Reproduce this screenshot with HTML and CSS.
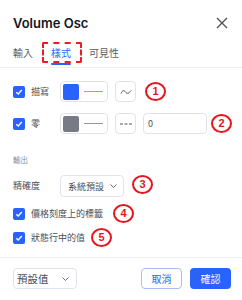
FILE: index.html
```html
<!DOCTYPE html>
<html lang="zh-Hant">
<head>
<meta charset="utf-8">
<link rel="stylesheet" href="styles.css">
</head>
<body>
<div class="dialog">
  <div class="header">
    <div class="title">Volume Osc</div>
    <svg class="close" width="12" height="12" viewBox="0 0 12 12"><path d="M1 1L11 11M11 1L1 11" stroke="#4c4f57" stroke-width="1.3" fill="none"/></svg>
  </div>
  <div class="tabs">
    <div class="tab">輸入</div>
    <div class="tab active">樣式<span class="underline"></span><span class="dashbox"></span></div>
    <div class="tab">可見性</div>
  </div>
  <div class="content">
    <div class="row">
      <div class="lead"><span class="cb"><svg width="8" height="8" viewBox="0 0 8 8"><path d="M1.3 4.2L3.2 6L6.8 2" stroke="#fff" stroke-width="1.3" fill="none"/></svg></span><span class="lbl">描寫</span></div>
      <div class="box colorbtn"><span class="sw blue"></span><span class="ln blueln"></span></div>
      <div class="box sq"><svg width="12" height="8" viewBox="0 0 12 8"><path d="M1 5.5C2.5 2 4 2 5.5 4S8.5 6 11 2.5" stroke="#50535e" stroke-width="1" fill="none"/></svg></div>
      <div class="mark m1">1</div>
    </div>
    <div class="row r2">
      <div class="lead"><span class="cb"><svg width="8" height="8" viewBox="0 0 8 8"><path d="M1.3 4.2L3.2 6L6.8 2" stroke="#fff" stroke-width="1.3" fill="none"/></svg></span><span class="lbl">零</span></div>
      <div class="box colorbtn"><span class="sw gray"></span><span class="ln grayln"></span></div>
      <div class="box sq"><svg width="12" height="4" viewBox="0 0 12 4"><path d="M0 2H3M4.5 2H7.5M9 2H12" stroke="#50535e" stroke-width="1" fill="none"/></svg></div>
      <div class="box input">0</div>
      <div class="mark m2">2</div>
    </div>
    <div class="section">輸出</div>
    <div class="row r3">
      <div class="lead"><span class="lbl plain">精確度</span></div>
      <div class="box select">系統預設<svg width="7" height="4" viewBox="0 0 7 4"><path d="M0.5 0.5L3.5 3.5L6.5 0.5" stroke="#6a6d78" stroke-width="1" fill="none"/></svg></div>
      <div class="mark m3">3</div>
    </div>
    <div class="row cbrow r4">
      <span class="cb"><svg width="8" height="8" viewBox="0 0 8 8"><path d="M1.3 4.2L3.2 6L6.8 2" stroke="#fff" stroke-width="1.3" fill="none"/></svg></span><span class="lbl">價格刻度上的標籤</span>
      <div class="mark m4">4</div>
    </div>
    <div class="row cbrow r5">
      <span class="cb"><svg width="8" height="8" viewBox="0 0 8 8"><path d="M1.3 4.2L3.2 6L6.8 2" stroke="#fff" stroke-width="1.3" fill="none"/></svg></span><span class="lbl">狀態行中的值</span>
      <div class="mark m5">5</div>
    </div>
  </div>
  <div class="footer">
    <div class="box fselect">預設值<svg width="7" height="4" viewBox="0 0 7 4"><path d="M0.5 0.5L3.5 3.5L6.5 0.5" stroke="#6a6d78" stroke-width="1" fill="none"/></svg></div>
    <div class="btns">
      <div class="btn cancel">取消</div>
      <div class="btn ok">確認</div>
    </div>
  </div>
</div>
</body>
</html>
```
FILE: styles.css
```css
* { box-sizing: border-box; }
html, body { margin: 0; padding: 0; background: #fff; }
body {
  font-family: "Noto Sans CJK TC", "Noto Sans", sans-serif;
  color: #131722;
}
.dialog { width: 242px; height: 300px; overflow: hidden; }
.header {
  height: 44px;
  padding: 2px 14px 0 13px;
  display: flex;
  align-items: center;
  justify-content: space-between;
}
.title {
  font-family: "Inter", "Noto Sans", sans-serif;
  font-weight: 600;
  font-size: 13px;
  line-height: 16px;
  color: #131722;
}
.close { display: block; }
.tabs {
  height: 24px;
  display: flex;
  gap: 18px;
  padding-left: 13px;
  border-bottom: 1px solid #eceef2;
}
.tab {
  position: relative;
  font-size: 10px;
  line-height: 14px;
  padding-top: 2px;
  color: #595c66;
}
.tab.active { color: #2962ff; }
.underline {
  position: absolute;
  left: 0; right: 0;
  top: 19px;
  height: 2px;
  background: #2962ff;
  border-radius: 1px;
}
.dashbox {
  position: absolute;
  left: -9px;
  top: -2px;
  width: 40px;
  height: 21px;
  border: 2px dashed #ee1c25;
  border-radius: 2px;
}
.content { padding: 13px 0 0 13px; }
.row {
  display: flex;
  align-items: center;
  height: 21px;
}
.r2 { margin-top: 11px; }
.lead {
  width: 47px;
  display: flex;
  align-items: center;
}
.cb {
  width: 12px;
  height: 12px;
  background: #2962ff;
  border-radius: 2px;
  display: flex;
  align-items: center;
  justify-content: center;
  flex: none;
}
.cb svg { display: block; }
.lbl {
  font-size: 9px;
  line-height: 12px;
  color: #4a4d57;
  margin-left: 6px;
  white-space: nowrap;
}
.lbl.plain { margin-left: 0; }
.box {
  height: 21px;
  border: 1px solid #e0e3eb;
  border-radius: 4px;
  display: flex;
  align-items: center;
}
.colorbtn { width: 48px; padding-left: 2px; }
.sw { width: 16px; height: 16px; border-radius: 2px; }
.sw.blue { background: #2962ff; }
.sw.gray { background: #787b86; }
.ln { width: 19px; height: 1px; margin-left: 5px; }
.blueln { background: #7fa0ff; }
.grayln { background: #9598a1; }
.sq { width: 21px; margin-left: 7px; justify-content: center; }
.sq svg { display: block; }
.input {
  width: 64px;
  margin-left: 7px;
  padding-left: 4px;
  font-size: 9px;
  color: #50535e;
}
.mark {
  width: 21px;
  height: 19px;
  border: 2px solid #e8141c;
  border-radius: 50%;
  color: #e8141c;
  font-family: "Liberation Sans", "Noto Sans", sans-serif;
  font-weight: 700;
  font-size: 11px;
  line-height: 15px;
  text-align: center;
  flex: none;
}
.m1 { margin-left: 9px; }
.m2 { margin-left: 4px; }
.m3 { margin-left: 8px; margin-top: -4px; }
.m4 { margin-left: 10px; }
.m5 { margin-left: 6px; }
.section {
  margin-top: 20px;
  font-size: 7.5px;
  line-height: 12px;
  color: #8a8d96;
}
.r3 { margin-top: 9px; height: 22px; }
.select {
  width: 64px;
  height: 22px;
  padding: 0 6px 0 7px;
  justify-content: space-between;
  font-size: 9px;
  color: #4a4d57;
}
.select svg, .fselect svg { display: block; }
.cbrow { height: 19px; }
.r4 { margin-top: 7px; }
.r5 { margin-top: 5px; }
.footer {
  margin-top: 10px;
  border-top: 1px solid #eef0f4;
  padding: 10px 11px 0 13px;
  display: flex;
  justify-content: space-between;
  align-items: center;
}
.fselect {
  width: 64px;
  padding: 0 7px 0 3px;
  justify-content: space-between;
  font-size: 10.5px;
  color: #4a4d57;
}
.btns { display: flex; gap: 8px; }
.btn {
  width: 41px;
  height: 21px;
  border-radius: 4px;
  font-size: 10px;
  display: flex;
  align-items: center;
  justify-content: center;
}
.cancel { border: 1px solid #a9bdf7; color: #2962ff; }
.ok { background: #2962ff; color: #fff; }
```
